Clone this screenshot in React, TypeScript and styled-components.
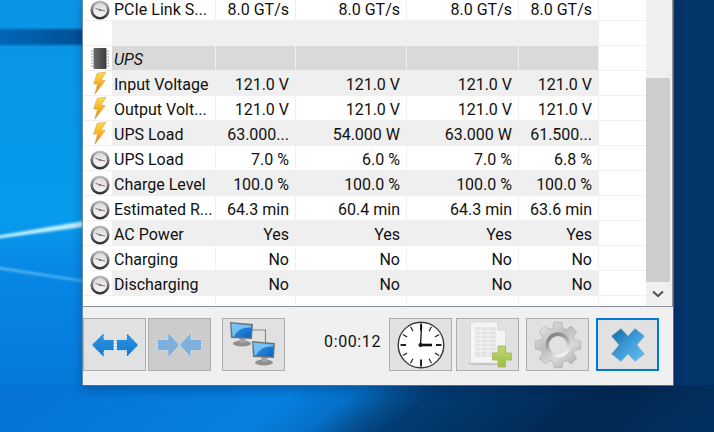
import { createGlobalStyle, styled } from "styled-components";

const GlobalStyle = createGlobalStyle`
  html, body {
    margin: 0;
    padding: 0;
    overflow: hidden;
    background: #0a6ec4;
  }
`;

interface RowData {
  icon: "clock" | "bolt" | "chip" | "none";
  label: string;
  values: string[];
  tone: "white" | "grey" | "head";
  italic?: boolean;
}

const rows: RowData[] = [
  { icon: "clock", label: "PCIe Link S...", values: ["8.0 GT/s", "8.0 GT/s", "8.0 GT/s", "8.0 GT/s"], tone: "white" },
  { icon: "none", label: "", values: ["", "", "", ""], tone: "grey" },
  { icon: "chip", label: "UPS", values: ["", "", "", ""], tone: "head", italic: true },
  { icon: "bolt", label: "Input Voltage", values: ["121.0 V", "121.0 V", "121.0 V", "121.0 V"], tone: "grey" },
  { icon: "bolt", label: "Output Volt...", values: ["121.0 V", "121.0 V", "121.0 V", "121.0 V"], tone: "white" },
  { icon: "bolt", label: "UPS Load", values: ["63.000...", "54.000 W", "63.000 W", "61.500..."], tone: "grey" },
  { icon: "clock", label: "UPS Load", values: ["7.0 %", "6.0 %", "7.0 %", "6.8 %"], tone: "white" },
  { icon: "clock", label: "Charge Level", values: ["100.0 %", "100.0 %", "100.0 %", "100.0 %"], tone: "grey" },
  { icon: "clock", label: "Estimated R...", values: ["64.3 min", "60.4 min", "64.3 min", "63.6 min"], tone: "white" },
  { icon: "clock", label: "AC Power", values: ["Yes", "Yes", "Yes", "Yes"], tone: "grey" },
  { icon: "clock", label: "Charging", values: ["No", "No", "No", "No"], tone: "white" },
  { icon: "clock", label: "Discharging", values: ["No", "No", "No", "No"], tone: "grey" },
];

const GaugeIcon = () => (
  <GaugeSvg width="20" height="20" viewBox="0 0 20 20">
    <defs>
      <linearGradient id="gaugeRim" x1="0" y1="0" x2="0" y2="1">
        <stop offset="0" stopColor="#c4c4c4" />
        <stop offset="0.55" stopColor="#6a6a6a" />
        <stop offset="1" stopColor="#2a2a2a" />
      </linearGradient>
      <linearGradient id="gaugeFace" x1="0" y1="0" x2="0" y2="1">
        <stop offset="0" stopColor="#dcdcdc" />
        <stop offset="1" stopColor="#f6f6f6" />
      </linearGradient>
    </defs>
    <circle cx="10" cy="10" r="9.6" fill="url(#gaugeRim)" />
    <circle cx="10" cy="10" r="7" fill="url(#gaugeFace)" />
    <path d="M5.5 8.2 10 10 15 11" stroke="#7a7a7a" strokeWidth="1" fill="none" />
    <circle cx="10" cy="10" r="1" fill="#a8503c" />
  </GaugeSvg>
);

const BoltIcon = () => (
  <svg width="20" height="24" viewBox="0 0 20 24">
    <defs>
      <linearGradient id="boltFill" x1="0" y1="0" x2="0" y2="1">
        <stop offset="0" stopColor="#ffe04a" />
        <stop offset="0.55" stopColor="#f9ad1e" />
        <stop offset="1" stopColor="#e07a18" />
      </linearGradient>
    </defs>
    <path d="M16 1 7.2 2.4 3.6 13 7.6 13 4.8 23.2 15.2 9.6 10.8 9.6Z" fill="url(#boltFill)" stroke="#d9a860" strokeWidth="0.7" strokeLinejoin="round" />
  </svg>
);

const ChipIcon = () => (
  <svg width="20" height="24" viewBox="0 0 20 24">
    <defs>
      <linearGradient id="chipBody" x1="0" y1="0" x2="1" y2="0">
        <stop offset="0" stopColor="#6a6a6a" />
        <stop offset="1" stopColor="#3c3c3c" />
      </linearGradient>
    </defs>
    <rect x="3.5" y="2" width="13" height="21" rx="1" fill="url(#chipBody)" />
    <path d="M1.8 4.5v1.2M1.8 7.5v1.2M1.8 10.5v1.2M1.8 13.5v1.2M1.8 16.5v1.2M1.8 19.5v1.2M18.2 4.5v1.2M18.2 7.5v1.2M18.2 10.5v1.2M18.2 13.5v1.2M18.2 16.5v1.2M18.2 19.5v1.2" stroke="#a4a4a4" strokeWidth="1.6" />
  </svg>
);

const RowIcon = ({ icon }: { icon: RowData["icon"] }) => {
  if (icon === "clock") return <GaugeIcon />;
  if (icon === "bolt") return <BoltIcon />;
  if (icon === "chip") return <ChipIcon />;
  return null;
};

const ArrowsOutIcon = () => (
  <svg width="48" height="26" viewBox="0 0 48 26">
    <defs>
      <linearGradient id="arrowBlue" x1="0" y1="0" x2="0" y2="1">
        <stop offset="0" stopColor="#2f95e6" />
        <stop offset="1" stopColor="#1478cc" />
      </linearGradient>
    </defs>
    <path d="M0.5 13 13 0.5V7.5H23V18.5H13V25.5Z" fill="url(#arrowBlue)" stroke="#f2f2f2" strokeDasharray="2 1" />
    <path d="M47.5 13 35.5 0.5V7.5H25.5V18.5H35.5V25.5Z" fill="url(#arrowBlue)" stroke="#f2f2f2" strokeDasharray="2 1" />
  </svg>
);

const ArrowsInIcon = () => (
  <svg width="45" height="26" viewBox="0 0 45 26">
    <path d="M22.5 13 11 0.5V7.5H0.5V18.5H11V25.5Z" fill="#7db0dc" stroke="#dedede" strokeDasharray="2 1" />
    <path d="M22.5 13 34 0.5V7.5H44.5V18.5H34V25.5Z" fill="#7db0dc" stroke="#dedede" strokeDasharray="2 1" />
  </svg>
);

const Monitor = ({ x, y }: { x: number; y: number }) => (
  <g transform={`translate(${x} ${y})`}>
    <ellipse cx="13" cy="22.5" rx="9" ry="3" fill="#8f8f8f" />
    <rect x="10.5" y="17" width="6" height="5" fill="#a4a4a4" />
    <path d="M1 1 24 3 23 18 2 17Z" fill="#6d7378" />
    <path d="M2.5 2.6 22.5 4.4 21.6 16.6 3.5 15.6Z" fill="url(#screenBlue)" />
    <path d="M2.5 2.6 22.5 4.4 22.3 6.5C14 6 8 9 5 15.6H3.5Z" fill="#8fd3f8" opacity="0.75" />
  </g>
);

const NetworkIcon = () => (
  <svg width="50" height="48" viewBox="0 0 50 48">
    <defs>
      <linearGradient id="screenBlue" x1="0" y1="0" x2="1" y2="1">
        <stop offset="0" stopColor="#38a4ee" />
        <stop offset="1" stopColor="#0a5fc0" />
      </linearGradient>
    </defs>
    <path d="M22 9H36.5V22" stroke="#8a8a8a" strokeWidth="1.2" fill="none" />
    <Monitor x={0} y={0} />
    <Monitor x={22} y={19} />
  </svg>
);

const ClockIcon = () => (
  <svg width="48" height="48" viewBox="0 0 48 48">
    <circle cx="24" cy="24" r="22.8" fill="#fff" stroke="#3a3a3a" strokeWidth="1.4" />
    <g stroke="#222" strokeWidth="1.2">
      <path d="M24 2.5V9.5" strokeWidth="2" />
      <path d="M24 38.5V45.5" strokeWidth="2" />
      <path d="M3.5 24H9" strokeWidth="2" />
      <path d="M39 24H44.5" strokeWidth="2" />
      <path d="M13.5 5.8 16 10.2M34.5 5.8 32 10.2M5.8 13.5 10.2 16M42.2 13.5 37.8 16M5.8 34.5 10.2 32M42.2 34.5 37.8 32M13.5 42.2 16 37.8M34.5 42.2 32 37.8" />
    </g>
    <path d="M23.5 24 24.6 4.5" stroke="#111" strokeWidth="1.3" />
    <path d="M23 24H35" stroke="#111" strokeWidth="2.6" />
    <circle cx="23.5" cy="24" r="2" fill="#111" />
  </svg>
);

const SheetPlusIcon = () => (
  <svg width="50" height="50" viewBox="0 0 50 50">
    <defs>
      <linearGradient id="plusGreen" x1="0" y1="0" x2="0" y2="1">
        <stop offset="0" stopColor="#c2d86c" />
        <stop offset="1" stopColor="#9cbc48" />
      </linearGradient>
    </defs>
    <ellipse cx="24" cy="43.5" rx="19" ry="1.6" fill="#bdbdbd" />
    <path d="M7.5 2H35L42.5 10V43H7.5Z" fill="#f5f5f5" stroke="#dadada" />
    <path d="M35 2V10H42.5" fill="#e4e4e4" stroke="#d2d2d2" />
    <rect x="12" y="7" width="21" height="30" fill="#e4e4e4" />
    <path d="M12 11H33M12 15H33M12 19H33M12 23H33M12 27H33M12 31H33M18 7V37M25 7V37" stroke="#f6f6f6" strokeWidth="1" />
    <path d="M35 26H42.5V33H48.5V40H42.5V47H35V40H29.5V33H35Z" fill="url(#plusGreen)" stroke="#a6bf60" strokeLinejoin="round" />
  </svg>
);

// eight toothed outline, built once from polar points
const gearOutline = Array.from({ length: 8 }, (_, i) => {
  const mid = (i * Math.PI) / 4 - Math.PI / 2;
  const point = (radius: number, offset: number) => {
    const a = mid + offset;
    return `${(24 + radius * Math.cos(a)).toFixed(2)} ${(24 + radius * Math.sin(a)).toFixed(2)}`;
  };
  return [point(17.5, -0.3), point(23, -0.17), point(23, 0.17), point(17.5, 0.3)].join(" L");
}).join(" L");

const GearIcon = () => (
  <svg width="48" height="48" viewBox="0 0 48 48">
    <defs>
      <linearGradient id="gearMetal" x1="0" y1="0" x2="0.8" y2="1">
        <stop offset="0" stopColor="#f0f0f0" />
        <stop offset="0.45" stopColor="#bdbdbd" />
        <stop offset="0.7" stopColor="#d8d8d8" />
        <stop offset="1" stopColor="#b0b0b0" />
      </linearGradient>
      <linearGradient id="gearRing" x1="0" y1="0" x2="0.5" y2="1">
        <stop offset="0" stopColor="#6a6a6a" />
        <stop offset="0.6" stopColor="#b4b4b4" />
        <stop offset="1" stopColor="#f4f4f4" />
      </linearGradient>
    </defs>
    <path d={`M${gearOutline}Z`} fill="url(#gearMetal)" stroke="#a8a8a8" strokeWidth="0.6" strokeLinejoin="round" />
    <circle cx="24" cy="24" r="12.5" fill="url(#gearRing)" />
    <circle cx="24" cy="24" r="9" fill="#e1e1e1" />
  </svg>
);

const CloseIcon = () => (
  <svg width="34" height="34" viewBox="0 0 34 34">
    <defs>
      <linearGradient id="closeBlue" x1="0" y1="0" x2="1" y2="1">
        <stop offset="0" stopColor="#12699f" />
        <stop offset="0.5" stopColor="#3d9cd8" />
        <stop offset="1" stopColor="#66bff0" />
      </linearGradient>
    </defs>
    <path d="M10 0.5 17 8 24 0.5 33.5 8 26 17 33.5 26 24 33.5 17 26 10 33.5 0.5 26 8 17 0.5 8Z" fill="url(#closeBlue)" stroke="#9ab0c0" strokeWidth="0.6" strokeLinejoin="round" />
  </svg>
);

export default function App() {
  return (
    <>
      <GlobalStyle />
      <Desktop>
        <Wallpaper viewBox="0 0 714 432" preserveAspectRatio="none">
          <defs>
            <linearGradient id="wallLeft" x1="0" y1="0" x2="0" y2="1">
              <stop offset="0" stopColor="#0a94e4" />
              <stop offset="0.5" stopColor="#079cec" />
              <stop offset="0.62" stopColor="#0788e6" />
              <stop offset="1" stopColor="#0574d4" />
            </linearGradient>
            <linearGradient id="wallBottom" gradientUnits="userSpaceOnUse" x1="0" y1="408" x2="271.5" y2="754.6">
              <stop offset="0" stopColor="#0574d4" />
              <stop offset="0.38" stopColor="#0780e0" />
              <stop offset="0.47" stopColor="#0570c8" />
              <stop offset="0.53" stopColor="#045090" />
              <stop offset="0.58" stopColor="#033c74" />
              <stop offset="0.83" stopColor="#012850" />
              <stop offset="1" stopColor="#02305e" />
            </linearGradient>
            <linearGradient id="bandFade" x1="0" y1="0" x2="1" y2="0">
              <stop offset="0" stopColor="#0668b8" />
              <stop offset="1" stopColor="#014d8e" />
            </linearGradient>
            <filter id="soft" x="-20%" y="-100%" width="140%" height="300%">
              <feGaussianBlur stdDeviation="1" />
            </filter>
          </defs>
          <rect width="714" height="432" fill="#03346a" />
          <rect width="90" height="432" fill="url(#wallLeft)" />
          <rect y="385" width="714" height="47" fill="url(#wallBottom)" />
          <rect x="-4" y="29" width="96" height="16" fill="url(#bandFade)" filter="url(#soft)" />
          <path d="M-4 236 90 220V226L-4 239Z" fill="#bdeefb" filter="url(#soft)" />
          <path d="M-4 266 90 281V283L-4 269Z" fill="#4fb6ef" filter="url(#soft)" />
        </Wallpaper>
        <Window>
          <TableArea>
            <Grid>
              {rows.map((row, i) => (
                <Row key={i} $tone={row.tone}>
                  <IconCell>
                    <RowIcon icon={row.icon} />
                  </IconCell>
                  <LabelCell $italic={row.italic}>{row.label}</LabelCell>
                  {row.values.map((value, j) => (
                    <ValueCell key={j}>{value}</ValueCell>
                  ))}
                  <EmptyCell />
                </Row>
              ))}
              <Row $tone="white">
                <IconCell />
                <LabelCell />
                {[0, 1, 2, 3].map((j) => (
                  <ValueCell key={j} />
                ))}
                <EmptyCell />
              </Row>
            </Grid>
            <Scrollbar>
              <Track>
                <Thumb />
              </Track>
              <ScrollButton>
                <svg width="12" height="8" viewBox="0 0 12 8">
                  <path d="M1 1.5 6 6 11 1.5" fill="none" stroke="#555" strokeWidth="2.2" />
                </svg>
              </ScrollButton>
            </Scrollbar>
          </TableArea>
          <Toolbar>
            <ToolButton>
              <ArrowsOutIcon />
            </ToolButton>
            <ToolButton $pressed $gap={2}>
              <ArrowsInIcon />
            </ToolButton>
            <ToolButton $gap={11}>
              <NetworkIcon />
            </ToolButton>
            <Timer>0:00:12</Timer>
            <ToolButton>
              <ClockIcon />
            </ToolButton>
            <ToolButton $gap={4}>
              <SheetPlusIcon />
            </ToolButton>
            <ToolButton $gap={7}>
              <GearIcon />
            </ToolButton>
            <ToolButton $gap={7} $focus>
              <CloseIcon />
            </ToolButton>
          </Toolbar>
        </Window>
      </Desktop>
    </>
  );
}

const Desktop = styled.div`
  position: relative;
  width: 714px;
  height: 432px;
  overflow: hidden;
`;

const Wallpaper = styled.svg`
  position: absolute;
  inset: 0;
  width: 714px;
  height: 432px;
`;

const Window = styled.div`
  position: absolute;
  left: 82px;
  top: 0;
  width: 592px;
  height: 386px;
  box-sizing: border-box;
  display: flex;
  flex-direction: column;
  background: #f0f0f0;
  border-left: 1px solid #6f8aa3;
  border-right: 1px solid #2a78c4;
  border-bottom: 1px solid #2a78c4;
  box-shadow: 0 4px 10px rgba(0, 20, 60, 0.3);
  font-family: Roboto, "Liberation Sans", sans-serif;
  font-size: 16px;
  color: #111;
`;

const TableArea = styled.div`
  display: flex;
  height: 307px;
  flex-shrink: 0;
  box-sizing: border-box;
  background: #fff;
  border-bottom: 1px solid #8a9099;
  border-right: 1px solid #8e8e8e;
  overflow: hidden;
`;

const Grid = styled.div`
  width: 563px;
  height: 306px;
  overflow: hidden;
`;

// the list is scrolled, so the first row sits 4px above the window top
const Row = styled.div<{ $tone: RowData["tone"] }>`
  display: grid;
  grid-template-columns: 29px 104px 80px 111px 112px 80px 47px;
  height: 25px;
  box-sizing: border-box;
  border-bottom: 1px solid #f0f0f0;
  background: ${(p) =>
    p.$tone === "head" ? "#d9d9d9" : p.$tone === "grey" ? "#efefef" : "#fff"};
  &:first-child {
    margin-top: -4px;
  }
`;

const IconCell = styled.div`
  background: #fff;
  display: flex;
  align-items: center;
  justify-content: center;
  padding-left: 5px;
  box-sizing: border-box;
  overflow: hidden;
`;

const GaugeSvg = styled.svg`
  margin-top: 4px;
`;

const LabelCell = styled.div<{ $italic?: boolean }>`
  padding: 4px 0 0 2px;
  line-height: 20px;
  white-space: nowrap;
  overflow: hidden;
  box-sizing: border-box;
  font-style: ${(p) => (p.$italic ? "italic" : "normal")};
  border-right: 1px solid #efefef;
`;

const ValueCell = styled.div`
  text-align: right;
  padding: 4px 6px 0 0;
  line-height: 20px;
  white-space: nowrap;
  overflow: hidden;
  box-sizing: border-box;
  border-right: 1px solid #efefef;
`;

const EmptyCell = styled.div`
  background: #fff;
`;

const Scrollbar = styled.div`
  width: 26px;
  display: flex;
  flex-direction: column;
  background: #f0f0f0;
`;

const Track = styled.div`
  flex: 1;
  display: flex;
  flex-direction: column;
  justify-content: flex-end;
  padding-right: 2px;
`;

const Thumb = styled.div`
  height: 204px;
  background: #cdcdcd;
`;

const ScrollButton = styled.div`
  height: 24px;
  padding-right: 2px;
  display: flex;
  align-items: center;
  justify-content: center;
`;

const Toolbar = styled.div`
  flex: 1;
  display: flex;
  align-items: flex-start;
  padding-top: 11px;
`;

const ToolButton = styled.div<{ $pressed?: boolean; $gap?: number; $focus?: boolean }>`
  width: 63px;
  height: 53px;
  flex-shrink: 0;
  box-sizing: border-box;
  display: flex;
  align-items: center;
  justify-content: center;
  background: ${(p) => (p.$pressed ? "#cccccc" : "#e1e1e1")};
  border: ${(p) => (p.$focus ? "2px solid #0078d7" : "1px solid #adadad")};
  margin-left: ${(p) => p.$gap ?? 0}px;
`;

const Timer = styled.div`
  width: 104px;
  line-height: 48px;
  letter-spacing: 0.6px;
  text-align: right;
  padding-right: 8px;
  box-sizing: border-box;
`;
